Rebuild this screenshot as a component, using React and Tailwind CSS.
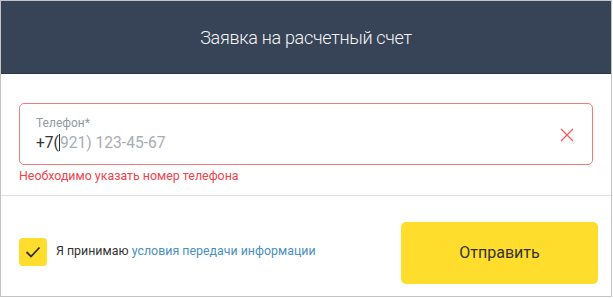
import React from 'react';

export default function App() {
    return (
        <div className="w-[613px] h-[298px] bg-white font-['Roboto',sans-serif]">
            <div className="w-[612px] h-[297px] border border-[#c4c4c4] flex flex-col">
                {/* Header */}
                <div className="h-[73px] bg-[#374357] border-b border-[#2c3647] flex items-center justify-center">
                    <h1 className="text-[18px] font-light text-[#f4f6f8] tracking-[-0.3px]">Заявка на расчетный счет</h1>
                </div>

                {/* Phone field */}
                <div className="px-[18px] pt-[29px] h-[122px] border-b border-[#e2e2e2]">
                    <div className="h-[62px] border border-[#f07b7b] rounded-[5px] pl-[16px] pr-[18px] flex items-center justify-between">
                        <div className="flex flex-col pt-[2px]">
                            <span className="text-[12px] leading-[14px] text-[#9299a2]">Телефон*</span>
                            <span className="text-[15.6px] leading-[22px] mt-[2px] text-[#333]">
                                +7(<span className="inline-block w-px h-[17px] bg-[#333] align-[-3px]"></span><span className="text-[#a8adb3]">921) 123-45-67</span>
                            </span>
                        </div>
                        <svg width="14" height="14" viewBox="0 0 14 14" className="mt-[1px]">
                            <path d="M1 1 L13 13 M13 1 L1 13" stroke="#f25b5b" strokeWidth="1.3" fill="none" />
                        </svg>
                    </div>
                    <p className="mt-[3px] text-[12.4px] leading-[16px] text-[#f0444b]">Необходимо указать номер телефона</p>
                </div>

                {/* Footer */}
                <div className="flex-1 flex items-center justify-between pl-[18px] pr-[13px] pt-[13px]">
                    <label className="flex items-center gap-[9px] mt-[-2px]">
                        <span className="w-[28px] h-[28px] rounded-[4px] bg-[#ffdd2d] flex items-center justify-center">
                            <svg width="16" height="12" viewBox="0 0 16 12">
                                <path d="M1.5 6 L6 10.5 L14.5 1.5" stroke="#2b2f36" strokeWidth="1.8" fill="none" />
                            </svg>
                        </span>
                        <span className="text-[12.4px] text-[#333]">
                            Я принимаю <span className="text-[#4a90c2]">условия передачи информации</span>
                        </span>
                    </label>
                    <button className="w-[197px] h-[62px] rounded-[5px] bg-[#ffdd2d] text-[16px] text-[#333]">Отправить</button>
                </div>
            </div>
        </div>
    );
}
